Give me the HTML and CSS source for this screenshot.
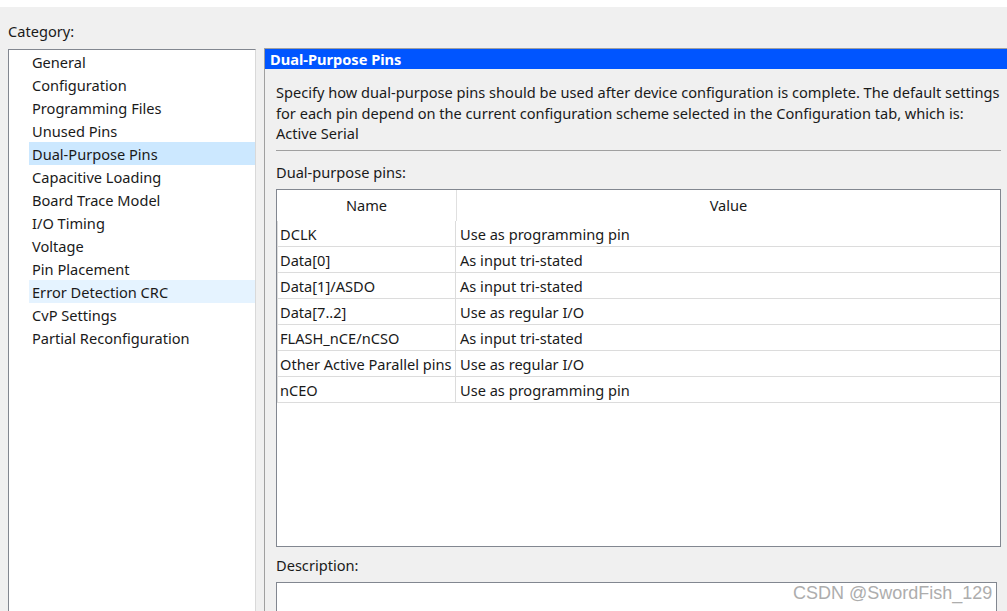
FILE: index.html
```html
<!DOCTYPE html>
<html>
<head>
<meta charset="utf-8">
<link rel="stylesheet" href="styles.css">
</head>
<body>
<div class="topbar"></div>
<div class="main">
  <div class="cat-label">Category:</div>
  <div class="row">
    <div class="catlist">
      <div class="item">General</div>
      <div class="item">Configuration</div>
      <div class="item">Programming Files</div>
      <div class="item">Unused Pins</div>
      <div class="item selected">Dual-Purpose Pins</div>
      <div class="item">Capacitive Loading</div>
      <div class="item">Board Trace Model</div>
      <div class="item">I/O Timing</div>
      <div class="item">Voltage</div>
      <div class="item">Pin Placement</div>
      <div class="item hover">Error Detection CRC</div>
      <div class="item">CvP Settings</div>
      <div class="item">Partial Reconfiguration</div>
    </div>
    <div class="panel">
      <div class="panel-head">Dual-Purpose Pins</div>
      <div class="panel-body">
        <p class="intro">Specify how dual-purpose pins should be used after device configuration is complete. The default settings<br>for each pin depend on the current configuration scheme selected in the Configuration tab, which is:<br>Active Serial</p>
        <div class="sep"></div>
        <div class="label">Dual-purpose pins:</div>
        <div class="grid">
          <div class="grid-head">
            <div class="c1">Name</div>
            <div class="c2">Value</div>
          </div>
          <div class="grid-row"><div class="c1">DCLK</div><div class="c2">Use as programming pin</div></div>
          <div class="grid-row"><div class="c1">Data[0]</div><div class="c2">As input tri-stated</div></div>
          <div class="grid-row"><div class="c1">Data[1]/ASDO</div><div class="c2">As input tri-stated</div></div>
          <div class="grid-row"><div class="c1">Data[7..2]</div><div class="c2">Use as regular I/O</div></div>
          <div class="grid-row"><div class="c1">FLASH_nCE/nCSO</div><div class="c2">As input tri-stated</div></div>
          <div class="grid-row"><div class="c1">Other Active Parallel pins</div><div class="c2">Use as regular I/O</div></div>
          <div class="grid-row"><div class="c1">nCEO</div><div class="c2">Use as programming pin</div></div>
        </div>
        <div class="label desc-label">Description:</div>
        <div class="desc-box"></div>
      </div>
    </div>
  </div>
</div>
<div class="watermark">CSDN @SwordFish_129</div>
</body>
</html>
```

FILE: styles.css
```css
html, body {
  margin: 0;
  padding: 0;
}
body {
  width: 1007px;
  height: 611px;
  overflow: hidden;
  background: #f0f0f0;
  font-family: "Noto Sans", "Open Sans", sans-serif;
  font-size: 14.6px;
  color: #1a1a1a;
  position: relative;
}
.topbar {
  height: 7px;
  background: #ffffff;
}
.main {
  padding: 14px 0 0 8px;
}
.cat-label {
  line-height: 20px;
  margin-bottom: 7px;
}
.row {
  display: flex;
  gap: 8px;
  align-items: flex-start;
}
.catlist {
  width: 246px;
  height: 600px;
  margin-top: 1px;
  background: #ffffff;
  border: 1px solid #828790;
  border-right-color: #d9d9d9;
  flex: none;
}
.item {
  margin-left: 20px;
  padding-left: 3px;
  height: 23px;
  line-height: 24px;
  white-space: nowrap;
}
.item.selected {
  background: #cce8ff;
}
.item.hover {
  background: #e5f3ff;
}
.panel {
  flex: 1;
  height: 600px;
  border-top: 1px solid #a0a0a0;
  border-left: 1px solid #a0a0a0;
}
.panel-head {
  height: 20px;
  line-height: 21px;
  background: #0055ff;
  color: #ffffff;
  font-weight: bold;
  padding-left: 5px;
}
.panel-body {
  padding: 0 6px 0 11px;
}
.intro {
  margin: 13px 0 0;
  line-height: 20.5px;
  white-space: nowrap;
}
.sep {
  height: 1px;
  background: #a0a0a0;
  margin-top: 6px;
}
.label {
  line-height: 20px;
  margin-top: 11px;
}
.grid {
  margin-top: 7px;
  height: 356px;
  background: #ffffff;
  border: 1px solid #828790;
}
.grid-head {
  display: flex;
  height: 31px;
  line-height: 31px;
}
.grid-head .c1 {
  width: 179px;
  text-align: center;
  border-right: 1px solid #e0e0e0;
}
.grid-head .c2 {
  flex: 1;
  text-align: center;
}
.grid-row {
  display: flex;
  height: 25px;
  line-height: 27px;
  border-bottom: 1px solid #dcdcdc;
  border-left: 1px solid #dcdcdc;
}
.grid-row .c1 {
  width: 175px;
  padding-left: 2px;
  border-right: 1px solid #dcdcdc;
  white-space: nowrap;
}
.grid-row .c2 {
  flex: 1;
  padding-left: 4px;
  white-space: nowrap;
}
.desc-label {
  margin-top: 8px;
}
.desc-box {
  margin-top: 7px;
  margin-right: 4px;
  height: 60px;
  background: #ffffff;
  border: 1px solid #828790;
}
.watermark {
  position: absolute;
  left: 793px;
  top: 582px;
  font-family: "Liberation Sans", Arial, sans-serif;
  font-size: 18px;
  line-height: 22px;
  color: #adadad;
  white-space: nowrap;
}
```
